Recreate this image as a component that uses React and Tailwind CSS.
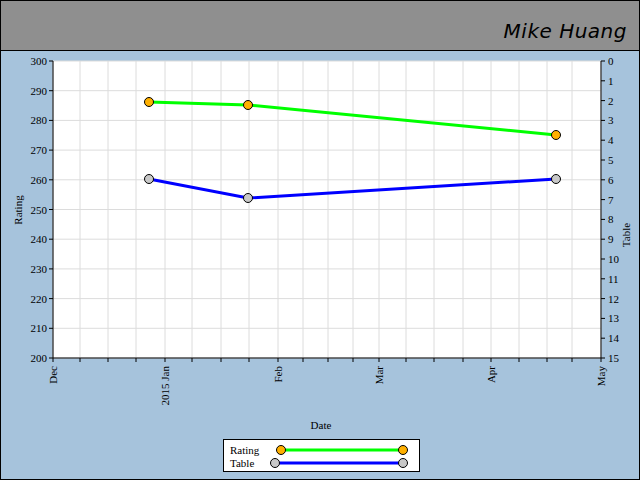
export default function App() {
  const vx = [52,79,107,135,164,191,220,248,277,302,327,352,378,405,433,462,490,518,546,571,600];
  const L = 52, R = 600, T = 61, B = 358;
  const hy = Array.from({ length: 11 }, (_, i) => T + (B - T) * i / 10);
  const ry = Array.from({ length: 16 }, (_, i) => T + (B - T) * i / 15);
  const months = [[52,'Dec'],[164,'2015 Jan'],[277,'Feb'],[378,'Mar'],[490,'Apr'],[600,'May']];
  const f = { fontFamily: '"Liberation Serif", serif', fontSize: 11 };
  return (
    <div className="w-[640px] h-[480px] flex flex-col bg-[#a6c3dc] border border-black overflow-hidden">
      <div className="h-[50px] shrink-0 bg-[#8f8f8f] border-b border-black flex items-end justify-end pr-3 pb-1">
        <span className="text-[20px] italic font-light text-black tracking-wide" style={{ fontFamily: '"DejaVu Sans", sans-serif', fontWeight: 200 }}>Mike Huang</span>
      </div>
      <svg width="638" height="428" viewBox="0 51 638 428" className="block" style={f}>
        <rect x={L} y={T} width={R - L} height={B - T} fill="#fff" />
        {vx.map(x => <line key={'v'+x} x1={x} x2={x} y1={T} y2={B} stroke="#dcdcdc" />)}
        {hy.map(y => <line key={'h'+y} x1={L} x2={R} y1={y} y2={y} stroke="#dcdcdc" />)}
        <line x1={L} x2={L} y1={T} y2={B} stroke="#000" />
        <line x1={R} x2={R} y1={T} y2={B} stroke="#000" />
        <line x1={L} x2={R} y1={B} y2={B} stroke="#000" />
        {hy.map((y, i) => <g key={'l'+i}><line x1={L-4} x2={L} y1={y} y2={y} stroke="#000" /><text x={L-6} y={y+4} textAnchor="end">{300 - i*10}</text></g>)}
        {ry.map((y, i) => <g key={'r'+i}><line x1={R} x2={R+4} y1={y} y2={y} stroke="#000" /><text x={R+7} y={y+4}>{i}</text></g>)}
        {vx.map(x => <line key={'t'+x} x1={x} x2={x} y1={B} y2={B+4} stroke="#000" />)}
        {months.map(([x, t]) => <text key={t} transform={`translate(${x+4},${B+8}) rotate(-90)`} textAnchor="end">{t}</text>)}
        <text transform="translate(21,210) rotate(-90)" textAnchor="middle">Rating</text>
        <text transform="translate(629,235) rotate(-90)" textAnchor="middle">Table</text>
        <text x="320" y="429" textAnchor="middle">Date</text>
        <polyline points="148,102 247,105 555,135" fill="none" stroke="#00ff00" strokeWidth="3" />
        <polyline points="148,179 247,198 555,179" fill="none" stroke="#0000ff" strokeWidth="3" />
        {[[148,102],[247,105],[555,135]].map(([x,y]) => <circle key={'a'+x} cx={x} cy={y} r="4.5" fill="#ffb000" stroke="#000" />)}
        {[[148,179],[247,198],[555,179]].map(([x,y]) => <circle key={'b'+x} cx={x} cy={y} r="4.5" fill="#c8c8c8" stroke="#000" />)}
        <rect x="222.5" y="439.5" width="196" height="32" fill="#fff" stroke="#000" />
        <text x="229" y="454">Rating</text>
        <text x="229" y="467">Table</text>
        <line x1="280" x2="402" y1="450" y2="450" stroke="#00ff00" strokeWidth="3" />
        <line x1="274" x2="402" y1="463" y2="463" stroke="#0000ff" strokeWidth="3" />
        <circle cx="280" cy="450" r="4.5" fill="#ffb000" stroke="#000" />
        <circle cx="402" cy="450" r="4.5" fill="#ffb000" stroke="#000" />
        <circle cx="274" cy="463" r="4.5" fill="#c8c8c8" stroke="#000" />
        <circle cx="402" cy="463" r="4.5" fill="#c8c8c8" stroke="#000" />
      </svg>
    </div>
  );
}
